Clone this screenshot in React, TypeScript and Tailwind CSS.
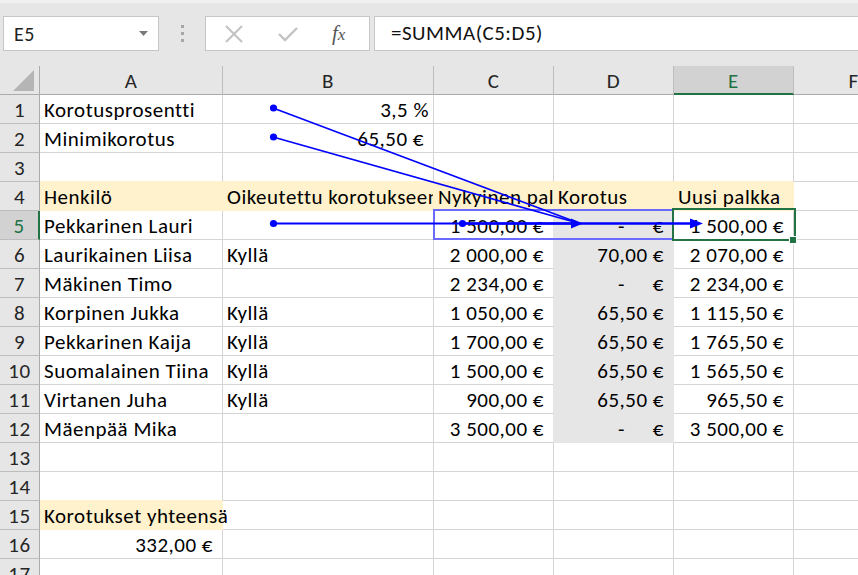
import React from 'react';

type Fill = 'y' | 'g' | null;
type Cell = {
  t?: string;
  right?: boolean;
  tight?: boolean; // small right padding (percent)
  fill?: Fill;
  clip?: boolean;
  dash?: boolean;
};

const FONT = "font-['Carlito','Lato',sans-serif]";

// column widths incl. right gridline
const COL_W = ['w-[183px]', 'w-[211px]', 'w-[120px]', 'w-[120px]', 'w-[120px]', 'w-[120px]'];
const COL_NAMES = ['A', 'B', 'C', 'D', 'E', 'F'];

const BG: Record<string, string> = { y: 'bg-[#fff2cc]', g: 'bg-[#e7e6e6]', n: '' };
const BR: Record<string, string> = { y: 'border-r-[#fff2cc]', g: 'border-r-[#e7e6e6]', n: 'border-r-[#d4d4d4]' };
const BB: Record<string, string> = { y: 'border-b-[#fff2cc]', g: 'border-b-[#e7e6e6]', n: 'border-b-[#d4d4d4]' };

const money = (t: string): Cell => ({ t, right: true });
const raise = (t: string | null): Cell => (t ? { t, right: true, fill: 'g' } : { dash: true, fill: 'g' });

const people: [string, boolean, string, string | null, string][] = [
  ['Pekkarinen Lauri', false, '1 500,00 €', null, '1 500,00 €'],
  ['Laurikainen Liisa', true, '2 000,00 €', '70,00 €', '2 070,00 €'],
  ['Mäkinen Timo', false, '2 234,00 €', null, '2 234,00 €'],
  ['Korpinen Jukka', true, '1 050,00 €', '65,50 €', '1 115,50 €'],
  ['Pekkarinen Kaija', true, '1 700,00 €', '65,50 €', '1 765,50 €'],
  ['Suomalainen Tiina', true, '1 500,00 €', '65,50 €', '1 565,50 €'],
  ['Virtanen Juha', true, '900,00 €', '65,50 €', '965,50 €'],
  ['Mäenpää Mika', false, '3 500,00 €', null, '3 500,00 €'],
];

const rows: Cell[][] = [
  [{ t: 'Korotusprosentti' }, { t: '3,5 %', right: true, tight: true }],
  [{ t: 'Minimikorotus' }, money('65,50 €')],
  [],
  [
    { t: 'Henkilö', fill: 'y' },
    { t: 'Oikeutettu korotukseen', fill: 'y', clip: true },
    { t: 'Nykyinen palkka', fill: 'y', clip: true },
    { t: 'Korotus', fill: 'y' },
    { t: 'Uusi palkka', fill: 'y' },
  ],
  ...people.map(([name, ok, now, r, next]) => [
    { t: name },
    ok ? { t: 'Kyllä' } : {},
    money(now),
    raise(r),
    money(next),
  ]),
  [],
  [],
  [{ t: 'Korotukset yhteensä', fill: 'y' }],
  [money('332,00 €')],
  [],
];

const fillAt = (r: number, c: number): Fill => rows[r]?.[c]?.fill ?? null;

function SheetCell({ cell, r, c }: { cell: Cell; r: number; c: number }) {
  const own = cell.fill ?? null;
  const rightKey = own ?? fillAt(r, c + 1) ?? 'n';
  const bottomKey = own ?? fillAt(r + 1, c) ?? 'n';
  return (
    <div
      className={`${COL_W[c]} h-[29px] shrink-0 border-r border-b ${BR[rightKey]} ${BB[bottomKey]} ${BG[own ?? 'n']} flex items-center pt-[2px] whitespace-nowrap ${
        cell.clip ? 'overflow-hidden' : ''
      } ${cell.right ? (cell.tight ? 'justify-end pr-[4px]' : 'justify-end pr-[9px]') : 'pl-[4px]'}`}
    >
      {cell.dash ? (
        <div className="flex w-full justify-end pr-[9px]">
          <span>-</span>
          <span className="ml-[28px]">€</span>
        </div>
      ) : (
        cell.t && <span>{cell.t}</span>
      )}
    </div>
  );
}

function Toolbar() {
  return (
    <div className="h-[66px] bg-[#e6e6e6] border-t-[3px] border-t-[#f0f0f0] flex items-start pt-[13px] pl-[3px]">
      {/* name box */}
      <div className="w-[156px] h-[35px] bg-white border border-[#c6c6c6] flex items-center justify-between pl-[10px] pr-[10px]">
        <span className="text-[20px] tracking-[0.4px] text-[#222]">E5</span>
        <svg width="9" height="5" viewBox="0 0 9 5">
          <path d="M0 0h9L4.5 5z" fill="#7a7a7a" />
        </svg>
      </div>
      {/* grip dots */}
      <div className="w-[46px] h-[35px] flex flex-col items-center justify-center gap-[4px]">
        <div className="w-[3px] h-[3px] bg-[#a6a6a6]" />
        <div className="w-[3px] h-[3px] bg-[#a6a6a6]" />
        <div className="w-[3px] h-[3px] bg-[#a6a6a6]" />
      </div>
      {/* cancel / enter / fx */}
      <div className="w-[165px] h-[35px] bg-white border border-[#c6c6c6] flex items-center pl-[18px]">
        <svg width="20" height="20" viewBox="0 0 20 20" className="mr-[34px]">
          <path d="M2 2L18 18M18 2L2 18" stroke="#c2c2c2" strokeWidth="2" />
        </svg>
        <svg width="20" height="16" viewBox="0 0 20 16" className="mr-[34px]">
          <path d="M1 8l6 6L19 2" stroke="#c2c2c2" strokeWidth="2.4" fill="none" />
        </svg>
        <span className="font-['Liberation_Serif',serif] italic text-[21px] text-[#555] leading-none">
          f<span className="text-[17px]">x</span>
        </span>
      </div>
      <div className="ml-[4px] flex-1 h-[35px] bg-white border border-[#c6c6c6] border-r-0 flex items-center pl-[16px]">
        <span className="text-[21px] tracking-[0.5px] text-[#111]">=SUMMA(C5:D5)</span>
      </div>
    </div>
  );
}

function Overlay() {
  const blue = '#0000ff';
  return (
    <svg className="pointer-events-none absolute left-0 top-0" width="858" height="575">
      <line x1="273" y1="108" x2="576" y2="222" stroke={blue} strokeWidth="1.6" />
      <line x1="273" y1="137" x2="576" y2="222.5" stroke={blue} strokeWidth="1.6" />
      <line x1="273" y1="223.5" x2="576" y2="223.5" stroke={blue} strokeWidth="2" />
      <line x1="462" y1="223.5" x2="694" y2="223.5" stroke={blue} strokeWidth="2.6" />
      <polygon points="571,218.5 583,223.5 571,228.5" fill={blue} />
      <polygon points="690,218.5 703,223.5 690,228.5" fill={blue} />
      <circle cx="273.5" cy="108" r="3.6" fill={blue} />
      <circle cx="273.5" cy="137" r="3.6" fill={blue} />
      <circle cx="273.5" cy="223.5" r="3.6" fill={blue} />
      <circle cx="462.5" cy="223.5" r="3.6" fill={blue} />
    </svg>
  );
}

export default function App() {
  return (
    <div className={`relative w-[858px] h-[575px] overflow-hidden bg-white text-black ${FONT}`}>
      <Toolbar />

      {/* Sheet */}
      <div className="text-[21px] leading-[28px] tracking-[0.5px]">
        {/* column headers */}
        <div className="flex h-[29px]">
          <div className="w-[40px] shrink-0 bg-[#e6e6e6] border-r border-b border-[#ababab] relative">
            <svg width="22" height="22" viewBox="0 0 22 22" className="absolute right-[4px] bottom-[2px]">
              <path d="M21 0V21H0z" fill="#b5b5b5" />
            </svg>
          </div>
          {COL_NAMES.map((n, i) =>
            n === 'E' ? (
              <div
                key={n}
                className={`${COL_W[i]} shrink-0 bg-[#d2d2d2] border-r border-r-[#bdbdbd] border-b-2 border-b-[#217346] flex items-center justify-center pt-[2px] text-[#217346]`}
              >
                {n}
              </div>
            ) : (
              <div
                key={n}
                className={`${COL_W[i]} shrink-0 bg-[#e6e6e6] border-r border-r-[#bdbdbd] border-b border-b-[#ababab] flex items-center justify-center pt-[2px] text-[#262626]`}
              >
                {n}
              </div>
            )
          )}
        </div>

        {rows.map((row, r) => (
          <div key={r} className="flex h-[29px]">
            {r === 4 ? (
              <div className="w-[40px] shrink-0 bg-[#d2d2d2] border-r-2 border-r-[#217346] border-b border-b-[#bdbdbd] flex items-center justify-center pt-[2px] text-[#217346]">
                {r + 1}
              </div>
            ) : (
              <div className="w-[40px] shrink-0 bg-[#e6e6e6] border-r border-r-[#ababab] border-b border-b-[#bdbdbd] flex items-center justify-center pt-[2px] text-[#262626]">
                {r + 1}
              </div>
            )}
            {COL_NAMES.map((_, c) => (
              <SheetCell key={c} cell={row[c] ?? {}} r={r} c={c} />
            ))}
          </div>
        ))}
      </div>

      {/* precedent range C5:D5 */}
      <div className="pointer-events-none absolute left-[433px] top-[209px] w-[241px] h-[31px] border-2 border-[#6a6aff]" />
      {/* active cell E5 */}
      <div className="pointer-events-none absolute left-[672px] top-[208px] w-[124px] h-[33px] border-2 border-[#217346]" />
      <div className="pointer-events-none absolute left-[789px] top-[236px] w-[8px] h-[8px] bg-[#217346] border border-white" />

      <Overlay />
    </div>
  );
}
